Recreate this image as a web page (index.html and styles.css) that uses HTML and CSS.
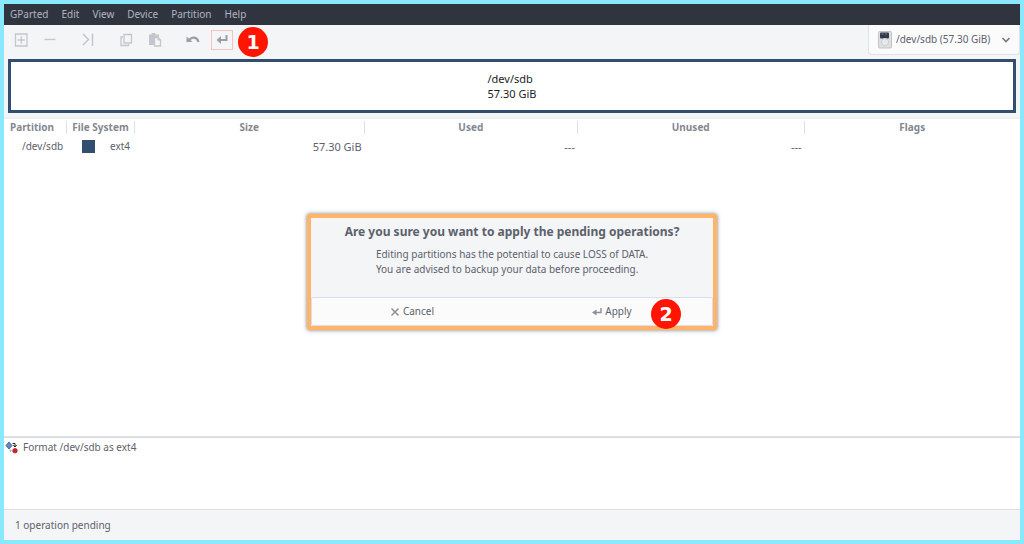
FILE: index.html
```html
<!DOCTYPE html>
<html lang="en">
<head>
<meta charset="utf-8">
<title>GParted</title>
<link rel="stylesheet" href="styles.css">
</head>
<body>
<div class="window">
  <nav class="menubar">
    <button type="button">GParted</button>
    <button type="button">Edit</button>
    <button type="button">View</button>
    <button type="button">Device</button>
    <button type="button">Partition</button>
    <button type="button">Help</button>
  </nav>
  <header class="toolbar">
    <div class="tools">
      <button type="button" class="tool" aria-label="New"><svg viewBox="0 0 16 16"><path d="M2.500 2h11.500v12h-11.500zM8.300 4.500v7M4.800 8h7" stroke-width="1.300"/></svg></button>
      <button type="button" class="tool" aria-label="Delete"><svg viewBox="0 0 16 16"><path d="M2.500 7.500h11" stroke-width="1.300"/></svg></button>
      <button type="button" class="tool gap" aria-label="Resize or move"><svg viewBox="0 0 16 16"><path d="M3 2 8.500 7.500 3 13M12.500 1.500v12.500" stroke-width="1.500"/></svg></button>
      <button type="button" class="tool gap" aria-label="Copy"><svg viewBox="0 0 16 16"><path d="M6 2.500h7.500v8.500H6zM5 5H3v8.500h7.500V12" stroke-width="1.300"/></svg></button>
      <button type="button" class="tool" aria-label="Paste"><svg viewBox="0 0 16 16"><path class="solid" d="M2 2.500h2.500V1h4v1.500H12V5H7v8H2z"/><path d="M7.500 5.500h3.500L13.500 8v6h-6z" stroke-width="1.300"/><path class="solid" d="M10.500 5v3.500H14z"/></svg></button>
      <button type="button" class="tool strong gap" aria-label="Undo"><svg viewBox="0 0 16 16"><path d="M4 8C7 4.500 12 4.500 13.500 10" stroke-width="2.200"/><path class="solid" d="M1.500 4.500V10h6z"/></svg></button>
      <button type="button" class="tool strong apply" aria-label="Apply"><svg viewBox="0 0 16 16"><path d="M12.500 3v5H6" stroke-width="2"/><path class="solid" d="M7 4v8L2.500 8z"/></svg></button>
      <span class="badge">1</span>
    </div>
    <div class="device">
      <svg class="drive" viewBox="0 0 14 18"><rect x=".5" y=".5" width="13" height="16.500" rx="1" fill="#dedfe1" stroke="#c2c3c7"/><rect x="2" y="1.500" width="9" height="6" rx="1" fill="#353b4b"/><path d="M3.500 3h2M7 3h2" stroke="#737b8b"/><circle cx="7" cy="11" r="3.500" fill="#f1f1f2" stroke="#cacbce"/><circle cx="7" cy="11" r="1.300" fill="#fff" stroke="#cacbce" stroke-width=".6"/></svg>
      <select class="device-select" aria-label="Device"><option>/dev/sdb (57.30 GiB)</option></select>
      <svg class="chevron" viewBox="0 0 10 8"><path d="M1.500 2 5 5.500 8.500 2" fill="none" stroke="#777c87" stroke-width="1.700"/></svg>
    </div>
  </header>
  <section class="disk"><div class="disk-label">/dev/sdb<br>57.30 GiB</div></section>
  <main class="list">
    <table>
      <colgroup><col class="c-part"><col class="c-fs"><col class="c-size"><col class="c-used"><col class="c-unused"><col></colgroup>
      <thead><tr><th><span>Partition</span></th><th><span>File System</span></th><th><span>Size</span></th><th><span>Used</span></th><th><span>Unused</span></th><th><span>Flags</span></th></tr></thead>
      <tbody><tr><td class="name">/dev/sdb</td><td><div class="fs"><i class="swatch"></i>ext4</div></td><td class="num">57.30 GiB</td><td class="num">---</td><td class="num">---</td><td></td></tr></tbody>
    </table>
  </main>
  <section class="operations">
    <div class="operation">
      <svg viewBox="0 0 14 14"><path d="M4 1 7 4.500 4 8 1 4.500z" fill="#6389bd" stroke="#4a6a98"/><path d="M7.500 2.500H10V5M8.300 4l1.700 2 1.700-2" fill="none" stroke="#222"/><circle cx="10" cy="9.700" r="2.300" fill="#d71f2c" stroke="#972331" stroke-width=".7"/><path d="M5.500 8.500v2.500M4.500 9.500h2" stroke="#a6adb8"/></svg>
      <span>Format /dev/sdb as ext4</span>
    </div>
  </section>
  <footer class="status">1 operation pending</footer>
</div>
<div class="overlay">
  <div class="dialog" role="dialog" aria-labelledby="dialog-title">
    <div class="message">
      <h1 id="dialog-title">Are you sure you want to apply the pending operations?</h1>
      <p>Editing partitions has the potential to cause LOSS of DATA.<br>You are advised to backup your data before proceeding.</p>
    </div>
    <div class="actions">
      <button type="button"><svg viewBox="0 0 10 10"><path d="M1.500 1.500l7 7M8.500 1.500l-7 7" fill="none" stroke="#8c9099" stroke-width="1.500"/></svg>Cancel</button>
      <button type="button"><svg viewBox="0 0 10 10"><path d="M9 1v4.500H3" fill="none" stroke="#8c9099" stroke-width="1.400"/><path d="M4.500 2.500v6L0 5.500z" fill="#8c9099"/></svg>Apply</button>
    </div>
    <span class="badge badge-dialog">2</span>
  </div>
</div>
</body>
</html>
```
FILE: styles.css
```css
* { box-sizing: border-box; }
body {
  margin: 0;
  font: 10px/15px "Noto Sans", sans-serif;
  color: #5c616c;
}
button, select { font: inherit; color: inherit; border: 0; background: none; padding: 0; margin: 0; }
svg { display: block; flex: none; }
.window {
  display: flex;
  flex-direction: column;
  min-height: 100vh;
  border: 4px solid #8ae8fc;
  background: #f4f5f7;
}
.menubar {
  display: flex;
  gap: 13px;
  padding: 3px 6px;
  background: #2f343f;
  color: #afb5c0;
}
.toolbar { display: flex; justify-content: space-between; height: 34px; }
.tools { display: flex; align-items: flex-start; padding: 5px 0 0 6px; }
.tool {
  display: grid;
  place-items: center;
  width: 22px;
  height: 20px;
  margin-right: 7px;
  color: #c3c6cc;
}
.tool svg { width: 16px; height: 16px; fill: none; stroke: currentColor; }
.tool .solid { fill: currentColor; stroke: none; }
.strong { color: #9b9ea7; }
.gap { margin-left: 9px; }
.apply { border: 1px solid #fbc0c0; margin-right: 5px; }
.badge {
  display: grid;
  place-items: center;
  width: 30px;
  height: 30px;
  margin-top: -3px;
  border-radius: 50%;
  background: #ff1500;
  color: #fff;
  font: bold 19px/30px "DejaVu Sans", sans-serif;
}
.device {
  display: flex;
  align-items: center;
  gap: 4px;
  height: 30px;
  padding: 0 8px 0 9px;
  border: 1px solid #dfe2ea;
  border-top: 0;
  border-radius: 0 0 3px 3px;
  background: #fbfbfc;
}
.drive { width: 14px; height: 18px; }
.device-select { appearance: none; height: 24px; }
.chevron { width: 10px; height: 8px; margin-left: 6px; }
.disk {
  display: grid;
  place-items: center;
  height: 54px;
  margin: 0 4px 4px;
  border: 3px solid #314e6e;
  background: #fff;
  color: #1c1c1c;
  font-size: 11px;
}
.list {
  flex: 1;
  border-top: 2px solid #eeeff0;
  background: #fff;
}
table { width: 100%; table-layout: fixed; border-collapse: collapse; }
.c-part { width: 63px; }
.c-fs { width: 68px; }
.c-size { width: 22.6%; }
.c-used { width: 21%; }
.c-unused { width: 22.3%; }
th { padding: 2px 0; color: #84878f; white-space: nowrap; }
th span { display: block; line-height: 13px; border-right: 1px solid #dfe0e3; }
th:first-child span { padding-right: 6px; }
th:last-child span { border: 0; }
td { padding: 3px 3px 3px 0; }
.name { padding-left: 18px; white-space: nowrap; }
.fs { display: flex; align-items: center; gap: 15px; padding-left: 15px; }
.swatch { width: 13px; height: 13px; background: #314e6e; }
.num { text-align: right; font-size: 11px; }
.operations {
  height: 74px;
  border-top: 2px solid #dbdfe3;
  border-bottom: 1px solid #dbdfe3;
  background: #fff;
}
.operation { display: flex; align-items: center; gap: 4px; padding: 2px 1px; }
.operation svg { width: 14px; height: 14px; }
.status { padding: 8px 11px 7px; }
.overlay {
  position: absolute;
  inset: 0;
  display: grid;
  place-items: center;
}
.dialog {
  position: relative;
  width: 410px;
  border: 4px solid #ffb46a;
  border-radius: 2px;
  background: #f4f5f7;
  box-shadow: 0 0 4px #777;
}
.message { display: flex; flex-direction: column; align-items: center; gap: 7px; padding: 5px 0 20px; }
.message h1 { margin: 0; font-size: 12px; line-height: 17px; color: #5c616c; white-space: nowrap; }
.message p { margin: 0; white-space: nowrap; }
.actions {
  display: grid;
  grid-template-columns: 1fr 1fr;
  height: 29px;
  border: 1px solid #dcdfeb;
  border-radius: 2px;
  background: #fbfbfc;
}
.actions button { display: flex; align-items: center; justify-content: center; gap: 3px; }
.actions svg { width: 10px; height: 10px; }
.badge-dialog { position: absolute; right: 32px; bottom: -3px; }
```
